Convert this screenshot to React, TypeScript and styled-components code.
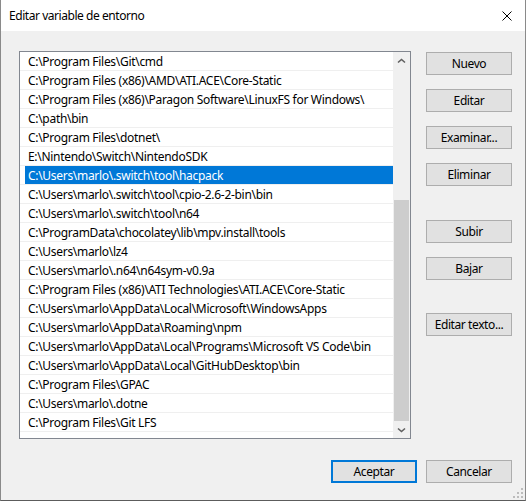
import styled, { createGlobalStyle } from 'styled-components';

const GlobalStyle = createGlobalStyle`
  html, body {
    margin: 0;
    padding: 0;
    background: #ffffff;
  }

  body {
    font-family: "Segoe UI", "Noto Sans", "Open Sans", sans-serif;
    font-size: 12px;
    letter-spacing: -0.3px;
    color: #000000;
  }
`;

const paths: string[] = [
  'C:\\Program Files\\Git\\cmd',
  'C:\\Program Files (x86)\\AMD\\ATI.ACE\\Core-Static',
  'C:\\Program Files (x86)\\Paragon Software\\LinuxFS for Windows\\',
  'C:\\path\\bin',
  'C:\\Program Files\\dotnet\\',
  'E:\\Nintendo\\Switch\\NintendoSDK',
  'C:\\Users\\marlo\\.switch\\tool\\hacpack',
  'C:\\Users\\marlo\\.switch\\tool\\cpio-2.6-2-bin\\bin',
  'C:\\Users\\marlo\\.switch\\tool\\n64',
  'C:\\ProgramData\\chocolatey\\lib\\mpv.install\\tools',
  'C:\\Users\\marlo\\lz4',
  'C:\\Users\\marlo\\.n64\\n64sym-v0.9a',
  'C:\\Program Files (x86)\\ATI Technologies\\ATI.ACE\\Core-Static',
  'C:\\Users\\marlo\\AppData\\Local\\Microsoft\\WindowsApps',
  'C:\\Users\\marlo\\AppData\\Roaming\\npm',
  'C:\\Users\\marlo\\AppData\\Local\\Programs\\Microsoft VS Code\\bin',
  'C:\\Users\\marlo\\AppData\\Local\\GitHubDesktop\\bin',
  'C:\\Program Files\\GPAC',
  'C:\\Users\\marlo\\.dotne',
  'C:\\Program Files\\Git LFS',
];

const SELECTED = 6;

type ButtonGroup = { labels: string[]; spaceBefore: number };

const sideGroups: ButtonGroup[] = [
  { labels: ['Nuevo', 'Editar', 'Examinar...', 'Eliminar'], spaceBefore: 0 },
  { labels: ['Subir', 'Bajar'], spaceBefore: 20 },
  { labels: ['Editar texto...'], spaceBefore: 19 },
];

const Chevron: React.FC<{ down?: boolean }> = ({ down }) => (
  <svg width="9" height="6" viewBox="0 0 9 6">
    <path
      d={down ? 'M1 1.5 L4.5 4.5 L8 1.5' : 'M1 4.5 L4.5 1.5 L8 4.5'}
      fill="none"
      stroke="#606060"
      strokeWidth="1.6"
    />
  </svg>
);

const CloseIcon = () => (
  <svg width="10" height="10" viewBox="0 0 10 10">
    <path d="M0.5 0.5 L9.5 9.5 M9.5 0.5 L0.5 9.5" stroke="#000" strokeWidth="1" />
  </svg>
);

const ResizeGrip = () => (
  <GripIcon width="10" height="10" viewBox="0 0 10 10">
    {[
      [8, 0],
      [4, 4], [8, 4],
      [0, 8], [4, 8], [8, 8],
    ].map(([x, y]) => (
      <rect key={`${x}-${y}`} x={x} y={y} width="2" height="2" fill="#bcbcbc" />
    ))}
  </GripIcon>
);

export default function App() {
  return (
    <>
      <GlobalStyle />
      <Window>
        <TitleBar>
          <span className="title">Editar variable de entorno</span>
          <CloseButton>
            <CloseIcon />
          </CloseButton>
        </TitleBar>

        <Body>
          <Main>
            <ListBox>
              <Rows>
                {paths.map((p, i) => (
                  <Row key={p}>
                    <Cell $selected={i === SELECTED}>{p}</Cell>
                  </Row>
                ))}
              </Rows>
              <ScrollBar $offset={131}>
                <ArrowButton>
                  <Chevron />
                </ArrowButton>
                <div className="track">
                  <div className="thumb" />
                </div>
                <ArrowButton>
                  <Chevron down />
                </ArrowButton>
              </ScrollBar>
            </ListBox>

            <SideColumn>
              {sideGroups.map((g) => (
                <SideGroup key={g.labels[0]} $spaceBefore={g.spaceBefore}>
                  {g.labels.map((label) => (
                    <Button key={label} type="button">
                      {label}
                    </Button>
                  ))}
                </SideGroup>
              ))}
            </SideColumn>
          </Main>

          <Footer>
            <Button type="button" $default>
              Aceptar
            </Button>
            <Button type="button">Cancelar</Button>
          </Footer>
        </Body>

        <ResizeGrip />
      </Window>
    </>
  );
}

const Window = styled.div`
  position: relative;
  box-sizing: border-box;
  width: 526px;
  height: 501px;
  display: flex;
  flex-direction: column;
  background: #f0f0f0;
  border-left: 1px solid #8a8a8a;
  border-right: 1px solid #8a8a8a;
  border-bottom: 1px solid #5c5c5c;
`;

const TitleBar = styled.div`
  height: 31px;
  flex-shrink: 0;
  display: flex;
  align-items: center;
  justify-content: space-between;
  background: #ffffff;
  padding-left: 8px;

  .title {
    font-size: 12px;
    letter-spacing: -0.45px;
    color: #000000;
  }
`;

const CloseButton = styled.div`
  width: 36px;
  height: 31px;
  display: flex;
  align-items: center;
  justify-content: center;
`;

const Body = styled.div`
  flex: 1;
  display: flex;
  flex-direction: column;
  padding: 20px 13px 0 18px;
`;

const Main = styled.div`
  display: flex;
  gap: 15px;
`;

const ListBox = styled.div`
  box-sizing: border-box;
  width: 392px;
  height: 388px;
  display: flex;
  background: #ffffff;
  border: 1px solid #828790;
  overflow: hidden;
`;

const Rows = styled.div`
  flex: 1;
  display: flex;
  flex-direction: column;
`;

const Row = styled.div`
  height: 19px;
  flex-shrink: 0;
  box-sizing: border-box;
  border-bottom: 1px solid #efefef;
`;

const Cell = styled.div<{ $selected?: boolean }>`
  box-sizing: border-box;
  height: 18px;
  padding: 2px 0 0 3px;
  line-height: 16px;
  margin-left: 5px;
  white-space: nowrap;
  overflow: hidden;
  background: ${({ $selected }) => ($selected ? '#0078d7' : 'transparent')};
  color: ${({ $selected }) => ($selected ? '#ffffff' : '#000000')};
`;

const ScrollBar = styled.div<{ $offset: number }>`
  width: 17px;
  flex-shrink: 0;
  display: flex;
  flex-direction: column;
  background: #f0f0f0;

  .track {
    flex: 1;
    display: flex;
    flex-direction: column;
    padding-top: ${({ $offset }) => $offset}px;
  }

  .thumb {
    flex: 1;
    margin: 0 1px;
    background: #cdcdcd;
  }
`;

const ArrowButton = styled.div`
  height: 17px;
  display: flex;
  align-items: center;
  justify-content: center;
`;

const SideColumn = styled.div`
  display: flex;
  flex-direction: column;
  padding-top: 1px;
`;

const SideGroup = styled.div<{ $spaceBefore: number }>`
  display: flex;
  flex-direction: column;
  gap: 14px;
  margin-top: ${({ $spaceBefore }) => $spaceBefore + 14}px;

  &:first-child {
    margin-top: 0;
  }
`;

const Button = styled.button<{ $default?: boolean }>`
  box-sizing: border-box;
  width: 86px;
  height: 23px;
  padding: 0;
  font-family: inherit;
  font-size: 12px;
  letter-spacing: -0.4px;
  color: #000000;
  background: #e1e1e1;
  border: ${({ $default }) => ($default ? '2px solid #0078d7' : '1px solid #adadad')};
  border-radius: 0;
  cursor: default;
`;

const Footer = styled.div`
  display: flex;
  justify-content: flex-end;
  gap: 9px;
  margin-top: 21px;
`;

const GripIcon = styled.svg`
  position: absolute;
  right: 2px;
  bottom: 2px;
`;
